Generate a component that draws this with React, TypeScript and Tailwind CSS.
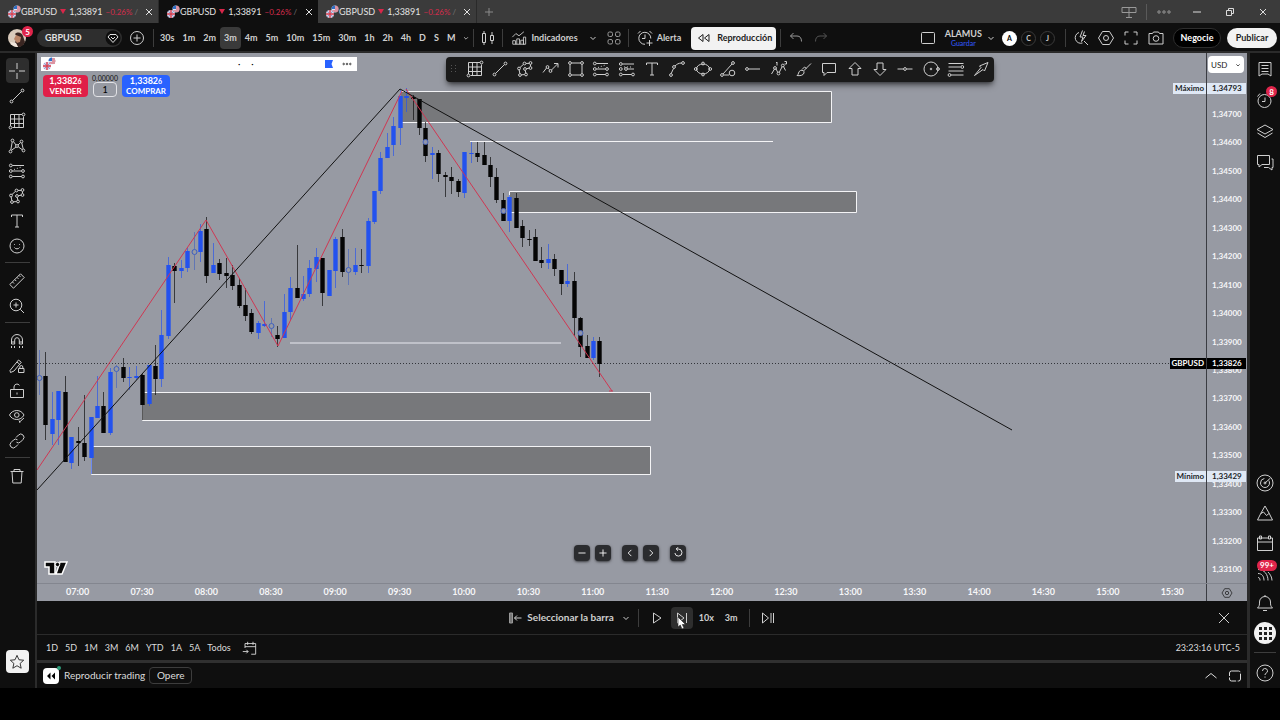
import { useState } from "react"
import type { ReactNode } from "react"

const dot = (cx: number, cy: number, r = 1.4) => <circle key={`${cx}-${cy}`} cx={cx} cy={cy} r={r} />

// 18x18 line icons, all drawn with a one pixel stroke
const icons: Record<string, ReactNode> = {
    cross: <path d="M9 1v6M9 11v6M1 9h6M11 9h6" />,
    line: <>{dot(3.5, 14.5)}{dot(14.5, 3.5)}<path d="M4.6 13.4 13.4 4.6" /></>,
    grid: <><path d="M2.5 2.5h11.5M2.5 2.5v11.5M15.5 4.5v11h-11M2.5 7h13M2.5 11.5h13M6.5 2.5v13M11 2.5v13" />{dot(15.5, 2.5)}{dot(2.5, 15.5)}</>,
    pattern: <>{dot(4.5, 3.5)}{dot(13.5, 4.5)}{dot(9, 9)}{dot(2.5, 14.5)}{dot(15.5, 13.5)}<path d="M4.2 5 2.8 13M5.4 4.6 8 8M12.5 5.6 10 8M13.8 6l1.4 6M3.5 13.3 8 10M10.2 9.8l4.2 3" /></>,
    fib: <>{dot(2.8, 3.5)}{dot(2.8, 9)}{dot(2.8, 14.5)}{dot(15, 9)}{dot(15, 14.5)}<path d="M4.3 3.5H16M4.3 9h9.3M4.3 14.5h9.3" /><path d="M6 7.5 14 4.8" strokeDasharray="1 2" /></>,
    forecast: <>{dot(2.8, 4)}{dot(2.8, 9)}{dot(8, 9)}{dot(2.8, 14.5)}{dot(15, 14.5)}<path d="M4.3 4H16M9.5 9H16M4.3 14.5h9.3" /><path d="M6 7 14 7" strokeDasharray="1 2" /></>,
    brushShape: <>{dot(3, 8.5)}{dot(8.5, 3.5)}{dot(14.5, 3)}{dot(14.5, 8)}{dot(9, 9)}{dot(10, 14.5)}{dot(4, 15)}<path d="M4 7.5 7.4 4.4M10 3.4h3M14.5 4.5v2M13 8.2l-2.6.5M9.3 10.5l.5 2.6M8.5 14.6l-3 .2M3.2 10l.6 3.5" /></>,
    text: <path d="M3.5 5V3h11v2M9 3v12M7 15h4" />,
    smile: <><circle cx="9" cy="9" r="7" /><path d="M6.5 10.5c.8 1.8 4.2 1.8 5 0M6.5 7v.8M11.5 7v.8" /></>,
    ruler: <path d="M1.8 12.5 12.5 1.8l3.7 3.7L5.5 16.2zM4.5 10l1.5 1.5M6.8 7.6l1.5 1.5M9 5.4l1.5 1.5M11 3.4l1.5 1.5" />,
    zoomIn: <><circle cx="8" cy="8" r="5.8" /><path d="m12.3 12.3 3.7 3.7M8 5.5v5M5.5 8h5" /></>,
    magnet: <path d="M3.5 12V8a5.500 5.500 0 0 1 11 0v4h-3.200V8a2.300 2.300 0 0 0-4.600 0v4zM3.500 10h3.200M11.300 10h3.200M3.500 14v2M6.500 14v2M11.500 14v2M14.500 14v2" />,
    pencilLock: <><path d="M2 13.500 10.500 3l2.800 2.300L6 14l-3.500 1.500zM9 5l2.600 2.200" /><path d="M10.500 11.500h5.500v4h-5.500zM11.800 11.500V10a1.500 1.500 0 0 1 3 0v1.500" /></>,
    lock: <><path d="M2.500 7.500h13v8h-13zM6 7.500V5a3 3 0 0 1 5.500-1.600" /><path d="M9 10.500v2" /></>,
    eye: <><path d="M1.500 8c3-6 11.500-6 14.500 0-3 6-11.500 6-14.500 0z" /><circle cx="8.800" cy="8" r="2.300" /><path d="m11 15.500 5-4.500M12 15.500l-1-2" /></>,
    link: <path d="M8 5.500 10.500 3a3 3 0 0 1 4.500 4.500L12.500 10a3 3 0 0 1-4 .200M10 12.500 7.500 15A3 3 0 0 1 3 10.500L5.500 8a3 3 0 0 1 4-.200" />,
    trash: <path d="M2.500 4.500h13M6 4.500v-2h6v2M4 4.500l.800 11.500h8.400L14 4.500" />,
    star: <path d="m9 1.500 2.200 5 5.300.5-4 3.600 1.200 5.400L9 13.200 4.300 16l1.200-5.400-4-3.600 5.300-.5z" />,
    trend: <>{dot(5.500, 7)}{dot(8.500, 11)}<path d="m1 12.500 3.500-4.500M6.300 8.200l1.200 1.500M9.500 10l6-6M12 3.500h4v4" /></>,
    rect: <>{dot(3, 3)}{dot(15, 3)}{dot(3, 15)}{dot(15, 15)}<path d="M4.500 3h9M4.500 15h9M3 4.500v9M15 4.500v9" /></>,
    curve: <>{dot(3, 15)}{dot(6, 7)}{dot(15, 3)}<path d="M3.200 13.500 5.500 8.500M7 6c2-2 3.500-2.800 6.500-3" /></>,
    ellipse: <><ellipse cx="9" cy="9" rx="6.500" ry="5" />{dot(1.800, 9)}{dot(16.200, 9)}{dot(9, 3.500)}{dot(9, 14.500)}</>,
    angle: <>{dot(3, 15)}{dot(14, 3)}<circle cx="13" cy="13" r="2.800" /><path d="M4 14 13 4M5 15h5" /></>,
    hray: <>{dot(3, 9)}<path d="M4.500 9H16" /></>,
    waves: <><path d="m1.500 14 3-5M5.800 8.500l2 4M9.200 12.500l3-6M13.500 6.500l2 4" />{dot(5, 8)}{dot(8.500, 13.500)}{dot(12.800, 5.500)}<path d="M6 3l1-1v3.500M14.500 1.500h2v2.500h-2" /></>,
    brush: <path d="M2 15.500c2-1 1-4 3.500-5 2-.800 4 .500 3.500 2.500-.600 2.500-4.500 3-7 2.500zM8.500 11l7.500-7.500M7 9.500l2.500-2.500 2 1.500" />,
    comment: <path d="M2.500 3.500h13v9H7l-3 3v-3H2.500z" />,
    up: <path d="m9 2.500 6 6h-3v6.500H6V8.500H3z" />,
    down: <path d="m9 15.500-6-6h3V3h6v6.500h3z" />,
    hline: <>{dot(9, 9)}<path d="M1.500 9h6M10.500 9h6" /></>,
    circle: <><circle cx="9" cy="9" r="7" /><circle cx="9" cy="9" r=".8" />{dot(16, 9)}</>,
    fibLines: <>{dot(15.300, 7)}{dot(2.500, 15)}<path d="M1.500 3.500h15M1.500 7h12M1.500 11h15M4 15h12.500" /></>,
    arrow: <path d="M2.500 15.500 11 9.500l1.500 1.500L16 2.500 7.500 6 9 7.500z" />,
    candles: <path d="M3.500 4.500h3v9h-3zM5 2v2.500M5 13.500V16M11.500 6.500h3v5h-3zM13 3v3.500M13 11.500V15" />,
    indicators: <><path d="M2 16V12h3v4M6.500 16v-6h3v6M11 16v-4.500h3V16M14 16V8h2.500v8zM2 16h13" /><path d="m1.500 8 4-4 3.500 2.500 5.500-4.500" /></>,
    apps: <><rect x="3" y="3" width="4.500" height="4.500" rx="1.500" /><rect x="10.500" y="3" width="4.500" height="4.500" rx="1.500" /><rect x="3" y="10.500" width="4.500" height="4.500" rx="1.500" /><rect x="10.500" y="10.500" width="4.500" height="4.500" rx="1.500" /></>,
    alarm: <path d="M14.800 9.500A6 6 0 1 0 9 15.300M9 5.500V9.500H6M2 4.500 4.500 2M13.500 2 16 4.500M13.500 11v6M10.500 14h6" />,
    clock: <><circle cx="8.500" cy="10" r="6.500" /><path d="M9 6.500V10.500H6M1.500 5.500 4 2.500" /></>,
    replay: <path d="M8 5.500v7L3.500 9zM14 5.500v7L9.500 9z" />,
    undo: <path d="M6.500 4 3.500 7l3 3M3.500 7H10c3 0 4.500 2 4.500 5.500" />,
    redo: <path d="m11.500 4 3 3-3 3M14.500 7H8c-3 0-4.500 2-4.500 5.500" />,
    layout: <rect x="2.500" y="3.500" width="13" height="11" rx="1" />,
    quick: <path d="M10.500 14A5.500 5.500 0 1 1 7 3.500M12 12l4 4M10.500 1.500 8 8h3l-1.500 4.500L14 6.500h-3l1.500-4" />,
    hex: <><path d="M5.500 2.500h7L16.500 9l-4 6.500h-7L1.500 9z" /><circle cx="9" cy="9" r="2.500" /></>,
    full: <path d="M3 6.500V3h3.500M11.500 3H15v3.500M15 11.500V15h-3.500M6.500 15H3v-3.500" />,
    camera: <><path d="M2 4.500h3.500l1-1.500h5l1 1.500H16v10.500H2z" /><circle cx="9" cy="9.500" r="2.800" /></>,
    list: <path d="M3 2.500h12v13.500l-3-2H6l-3 2zM5.500 5.500h7M5.500 8.500h7M5.500 11.500h7" />,
    layers: <path d="m9 3 8 4.500-8 4.500-8-4.500zM1.500 11 9 15.500l7.500-4.500" />,
    chat: <path d="M1.500 2.500h12v9H6l-3 2.500v-2.500H1.500zM15.500 6h1.500v8.500h-1v2.500l-3.500-2.500H8" />,
    target: <><circle cx="9" cy="9" r="8" /><circle cx="9" cy="9" r="4.500" strokeDasharray="20 5" /><path d="m9 9 5.500-5" /><circle cx="9" cy="9" r="1" /></>,
    ideas: <path d="M9 2 5 9 1.500 16h15L13 9zM5 9.500l2.500-1.500 3 3.500 2.500-2" />,
    calendar: <path d="M3 4h2M5 4h8M15 4h1.500v12.500h-15V4H3M1.500 8h15M3.500 2h2v3h-2zM12.500 2h2v3h-2z" />,
    feed: <path d="M2 13.500c1.500 0 2 1 2 3M2 9.500c4 0 6 3 6 7M2 5.500c6.500 0 10 5 10 11M12 8c2 2 4 5 4 8.500" />,
    bell: <path d="M1.500 14h15c-2-2-2-3-2-6a5.500 5.500 0 0 0-11 0c0 3 0 4-2 6zM7 16.500h4M9 1v1.500" />,
    help: <><circle cx="9" cy="9" r="8" /><path d="M6.500 7a2.500 2.500 0 1 1 3.500 2.300c-.700.300-1 .700-1 1.700M9 12.500v1.200" /></>,
    barSelect: <><path d="M2.500 4h3v10h-3z" fill="#777" stroke="#999" /><path d="M14.500 9H7.500M10 6.500 7.500 9l2.500 2.500" /></>,
    play: <path d="m5.500 4 7.500 5-7.500 5z" />,
    step: <path d="m4.500 4 6.500 5-6.500 5zM13.500 4v10" />,
    skip: <path d="m3.500 4 6 5-6 5zM12 4v10M14.500 4v10" />,
    close: <path d="m4 4 10 10M14 4 4 14" />,
    smallClose: <path d="m6 6 6 6M12 6l-6 6" />,
    plus: <path d="M9 5v8M5 9h8" />,
    minus: <path d="M5 9h8" />,
    plusCircle: <><circle cx="9" cy="9" r="6.500" /><path d="M9 5.500v7M5.500 9h7" /></>,
    down2: <path d="m6.500 8 2.500 2.500L11.500 8" />,
    up2: <path d="m3.500 11 5.500-4.500 5.500 4.500" />,
    left: <path d="M10.500 5.500 7 9l3.500 3.500" />,
    right: <path d="M7.500 5.500 11 9l-3.500 3.500" />,
    reset: <path d="M7 4.500h2.500a4 4 0 1 1-4 4.500M9 2.500l-2 2 2 2" />,
    goto: <path d="M4.500 9V4h12v12h-5M4.500 7.500h12M7.500 2v3.500M13.500 2v3.500M2 13h6M6 11l2 2-2 2" />,
    square: <rect x="3.500" y="4" width="11" height="10" rx="2" strokeDasharray="9 1.500" />,
    dots: <>{dot(4, 9, 1.2)}{dot(9, 9, 1.2)}{dot(14, 9, 1.2)}</>,
    split: <path d="M2 4.500h14v5H2zM9 4.500v10M6 14.500h6" />,
    restore: <path d="M5.500 7.500h5v5h-5zM7.500 7.500v-2h5v5h-2" />,
    gem: <><circle cx="9" cy="9" r="7.500" fill="#0f0f0f" stroke="none" /><path d="M6 5.500h6L14 8 9 13.500 4 8zM7 8l2 2 2-2" /></>,
}

const Icon = ({ name, className = "size-[18px]" }: { name: string, className?: string }) => (
    <svg viewBox="0 0 18 18" className={`shrink-0 ${className}`} fill="none" stroke="currentColor" strokeWidth="1" aria-hidden="true">
        {icons[name]}
    </svg>
)

const Flags = () => (
    <svg viewBox="0 0 14 14" className="size-[14px] shrink-0" aria-hidden="true">
        <circle cx="10" cy="4" r="3.500" fill="#dfe6f5" />
        <path d="M6.500 4A3.500 3.500 0 0 1 10 .5V4z" fill="#2f6fc4" />
        <path d="M10 2h3M10 4h3.500M7 6h6" stroke="#d9404f" />
        <circle cx="5" cy="9" r="4" fill="#d8d4ea" />
        <path d="M2.200 6.200 7.800 11.800M7.800 6.200 2.200 11.800" stroke="#5b74b8" strokeWidth=".6" />
        <path d="M5 5v8M1 9h8" stroke="#d9404f" strokeWidth="1.400" />
    </svg>
)

const Sep = () => <span className="h-[18px] w-px shrink-0 bg-[#3d3d3d]" />

const Tab = ({ active = false }: { active?: boolean }) => (
    <div className={`flex w-[159px] items-center pl-[7px] text-[9px] text-[#e2e2e2] ${active ? "bg-[#0f0f0f]" : "border-r border-[#2a2a2a]"}`}>
        <Flags />
        <a href="#chart" className="flex flex-1 items-center gap-0.5 whitespace-nowrap">
            <span>GBPUSD</span>
            <svg viewBox="0 0 6 5" className="mx-px h-[5px] w-[6px]" aria-hidden="true"><path d="M0 0h6L3 5z" fill="#d8274a" /></svg>
            <span>1,33891</span>
            <span className="ml-px text-[8px] text-[#d42c4c]">−0.26%</span>
            <span className="text-[8px] text-[#777]">/</span>
        </a>
        <button aria-label="Cerrar pestaña"><Icon name="smallClose" /></button>
    </div>
)

const TabBar = () => (
    <header className="flex h-[23px] shrink-0 bg-[#3b3b3b] text-[#dcdcdc]">
        <Tab />
        <Tab active />
        <Tab />
        <button aria-label="Nueva pestaña" className="ml-[3px] text-[#8a8a8a]"><Icon name="plus" /></button>
        <div className="ml-auto flex items-center">
            <button aria-label="Dividir" className="text-[#999]"><Icon name="split" /></button>
            <span className="mx-2 h-4 w-px bg-[#5a5a5a]" />
            <button aria-label="Más" className="text-[#999]"><Icon name="dots" /></button>
            <button aria-label="Minimizar" className="ml-[15px]"><Icon name="minus" /></button>
            <button aria-label="Restaurar" className="ml-[15px]"><Icon name="restore" /></button>
            <button aria-label="Cerrar" className="ml-[15px] mr-2"><Icon name="smallClose" /></button>
        </div>
    </header>
)

const timeframes = ["30s", "1m", "2m", "3m", "4m", "5m", "10m", "15m", "30m", "1h", "2h", "4h", "D", "S", "M"]

const Toolbar = () => {
    const [frame, setFrame] = useState("3m")

    return <nav className="flex h-7 shrink-0 items-center bg-[#0f0f0f] pt-0.5 text-[9px] font-bold text-[#cfcfcf]">
        <button aria-label="Cuenta" className="relative ml-2 size-[18px] shrink-0">
            <svg viewBox="0 0 18 18" className="size-[18px]" aria-hidden="true">
                <circle cx="9" cy="9" r="9" fill="#d9cabb" />
                <path d="M7 5c3-3 7-1 8 2l2 6c-1 3-4 5-7 5l-3-5 3-4z" fill="#3a2622" />
                <path d="M8 6l5 2-1 5-3 1-3-4z" fill="#b98467" />
                <path d="M2 13l6 1 2 4c-3 0-6-1-8-5z" fill="#f1e6dc" />
            </svg>
            <span className="absolute -right-[7px] -top-[3px] flex size-[11px] items-center justify-center rounded-full bg-[#e0254b] text-[8px] text-white">5</span>
        </button>
        <button className="ml-[11px] flex h-[18px] w-[85px] shrink-0 items-center justify-between rounded-full bg-[#2e2e2e] pl-2 text-[#e2e2e2]">
            GBPUSD <Icon name="gem" />
        </button>
        <button aria-label="Añadir símbolo" className="ml-[6px] mr-[7px]"><Icon name="plusCircle" /></button>
        <Sep />
        <div className="ml-0.5 flex">
            {timeframes.map(t => (
                <button key={t} onClick={() => setFrame(t)} className={`h-[22px] rounded px-1 ${t === frame ? "bg-[#3a3a3a]" : ""}`}>{t}</button>
            ))}
        </div>
        <button aria-label="Intervalos"><Icon name="down2" className="size-[14px]" /></button>
        <Sep />
        <button aria-label="Velas" className="mx-[5px]"><Icon name="candles" /></button>
        <Sep />
        <button className="ml-2 flex items-center gap-1"><Icon name="indicators" className="size-4" />Indicadores</button>
        <button aria-label="Favoritos" className="ml-[6px]"><Icon name="down2" /></button>
        <button aria-label="Plantillas" className="ml-[3px] mr-[5px] text-[#999]"><Icon name="apps" /></button>
        <Sep />
        <button className="ml-[7px] flex items-center gap-[3px]"><Icon name="alarm" />Alerta</button>
        <button className="ml-[10px] mr-1 flex h-[23px] w-[85px] items-center justify-center gap-1 rounded bg-[#f2f2f2] text-[#1c1c1c]"><Icon name="replay" />Reproducción</button>
        <Sep />
        <button aria-label="Deshacer" className="ml-[6px] text-[#999]"><Icon name="undo" /></button>
        <button aria-label="Rehacer" className="ml-[7px] text-[#555]"><Icon name="redo" /></button>
        <div className="ml-auto flex items-center">
            <button aria-label="Diseño"><Icon name="layout" /></button>
            <button className="ml-2 flex flex-col items-center leading-[10px]">
                ALAMUS
                <span className="text-[7px] font-medium leading-[8px] text-[#2f55f0]">Guardar</span>
            </button>
            <button aria-label="Diseños"><Icon name="down2" /></button>
            <div className="ml-0.5 mr-[10px] flex gap-1 text-[7px]">
                <button className="size-[15px] rounded-full bg-white text-black">A</button>
                <button className="size-[15px] rounded-full border border-[#3a3a3a]">C</button>
                <button className="size-[15px] rounded-full border border-[#3a3a3a]">J</button>
            </div>
            <Sep />
            <div className="ml-[6px] mr-2 flex gap-[7px]">
                <button aria-label="Búsqueda rápida"><Icon name="quick" /></button>
                <button aria-label="Ajustes"><Icon name="hex" /></button>
                <button aria-label="Pantalla completa"><Icon name="full" /></button>
                <button aria-label="Captura"><Icon name="camera" /></button>
            </div>
            <button className="h-5 w-12 rounded-full border border-[#2e2e2e] bg-black text-[9px] text-white">Negocie</button>
            <button className="ml-[6px] mr-[3px] h-5 w-[50px] rounded-full bg-[#f2f2f2] text-[#1c1c1c]">Publicar</button>
        </div>
    </nav>
}

const railGroups = [
    ["cross", "line", "grid", "pattern", "fib", "brushShape", "text", "smile"],
    ["ruler", "zoomIn"],
    ["magnet", "pencilLock", "lock", "eye", "link"],
    ["trash"],
]

const LeftRail = () => (
    <aside className="flex w-[35px] shrink-0 flex-col items-center bg-[#0f0f0f] pr-px pt-[5px] text-[#cfcfcf]">
        {railGroups.map((group, i) => (
            <div key={i} className="flex w-full flex-col items-center">
                {i > 0 && <span className="mb-[5px] mt-1 h-px w-[25px] bg-[#3d3d3d]" />}
                {group.map(name => (
                    <button key={name} aria-label={name} className={`flex h-[25px] w-[23px] items-center justify-center rounded ${name === "cross" ? "bg-[#2e2e2e]" : ""}`}>
                        <Icon name={name} />
                    </button>
                ))}
            </div>
        ))}
        <button aria-label="Favoritos" className="mb-[15px] mt-auto flex size-[23px] items-center justify-center rounded bg-[#f2f2f2] text-[#222]">
            <Icon name="star" className="size-4" />
        </button>
    </aside>
)

const railTop = ["list", "clock", "layers", "chat"]
const railBottom = ["target", "ideas", "calendar", "feed", "bell"]

const RightRail = () => (
    <aside className="flex w-[30px] shrink-0 flex-col items-center bg-[#0f0f0f] text-[#cfcfcf]">
        {railTop.map(name => (
            <button key={name} aria-label={name} className="relative flex h-[31px] items-center">
                <Icon name={name} />
                {name === "clock" && <span className="absolute -right-[3px] top-0.5 flex size-[11px] items-center justify-center rounded-full bg-[#e0254b] text-[8px] font-bold text-white">8</span>}
            </button>
        ))}
        <div className="mt-auto flex flex-col items-center">
            {railBottom.map(name => (
                <button key={name} aria-label={name} className="relative flex h-[30px] items-center">
                    <Icon name={name} />
                    {name === "feed" && <span className="absolute -right-[3px] top-0.5 rounded-full bg-[#e0254b] px-[3px] text-[8px] font-bold leading-[11px] text-white">99+</span>}
                </button>
            ))}
            <button aria-label="Aplicaciones" className="my-1 grid size-[22px] grid-cols-[3px_3px_3px] place-content-center gap-0.5 rounded-full bg-[#f2f2f2]">
                {Array.from({ length: 9 }, (_, i) => <span key={i} className="size-[3px] bg-[#222]" />)}
            </button>
            <span className="my-1 h-px w-[22px] bg-[#3d3d3d]" />
            <button aria-label="Ayuda" className="flex h-[31px] items-center"><Icon name="help" /></button>
        </div>
    </aside>
)

// [x, high, body top, body bottom, low, colour: k = black, b = blue, o = ring]
type Candle = [number, number, number, number, number, "k" | "b" | "o"]
const candles: Candle[] = [
    [39, 350, 378, 378, 395, "o"], [45, 352, 376, 425, 440, "k"], [52, 392, 419, 434, 445, "b"], [58, 391, 391, 420, 445, "b"],
    [65, 376, 392, 462, 462, "k"], [71, 437, 437, 463, 469, "b"], [78, 427, 441, 443, 466, "k"], [84, 395, 443, 457, 461, "k"],
    [91, 417, 417, 458, 474, "b"], [97, 376, 406, 418, 418, "b"], [103, 392, 406, 433, 433, "k"], [110, 368, 372, 433, 435, "b"],
    [116, 365, 369, 369, 388, "o"], [123, 358, 367, 378, 382, "k"], [129, 367, 377, 378, 390, "b"], [136, 366, 376, 378, 380, "b"],
    [142, 373, 375, 405, 420, "k"], [149, 365, 365, 404, 406, "b"], [155, 345, 366, 379, 395, "k"], [161, 310, 335, 379, 387, "b"],
    [168, 257, 265, 336, 339, "b"], [174, 263, 266, 271, 303, "k"], [181, 260, 268, 271, 278, "b"], [187, 248, 251, 268, 272, "b"],
    [194, 232, 252, 252, 270, "o"], [200, 224, 231, 252, 262, "b"], [206, 217, 229, 276, 283, "k"], [213, 243, 265, 273, 273, "b"],
    [219, 259, 263, 274, 280, "k"], [226, 258, 273, 276, 288, "k"], [232, 265, 275, 286, 290, "k"], [239, 278, 285, 306, 308, "k"],
    [245, 288, 305, 316, 321, "k"], [251, 309, 313, 332, 334, "k"], [258, 321, 323, 333, 339, "b"], [264, 301, 324, 326, 327, "b"],
    [271, 318, 326, 326, 337, "o"], [277, 326, 335, 339, 347, "k"], [284, 294, 312, 338, 338, "b"], [290, 277, 288, 312, 320, "b"],
    [297, 245, 288, 298, 298, "k"], [303, 276, 294, 299, 301, "b"], [309, 260, 268, 294, 297, "b"], [316, 248, 257, 269, 282, "b"],
    [322, 258, 258, 293, 306, "k"], [329, 270, 270, 296, 296, "b"], [335, 237, 239, 271, 288, "b"], [342, 229, 237, 272, 277, "k"],
    [348, 249, 270, 270, 285, "o"], [355, 248, 265, 272, 275, "b"], [361, 249, 265, 266, 273, "k"], [368, 218, 221, 266, 273, "b"],
    [374, 191, 191, 222, 224, "b"], [380, 152, 158, 191, 194, "b"], [387, 133, 147, 158, 158, "b"], [393, 117, 126, 145, 156, "b"],
    [400, 90, 96, 128, 145, "b"], [406, 88, 96, 98, 112, "b"], [413, 95, 97, 99, 120, "k"], [419, 99, 99, 128, 135, "k"],
    [425, 122, 128, 156, 162, "k"], [432, 147, 153, 155, 179, "b"], [438, 150, 153, 174, 182, "k"], [445, 172, 175, 177, 197, "k"],
    [451, 167, 177, 181, 194, "k"], [458, 179, 181, 192, 197, "k"], [464, 152, 152, 193, 198, "b"], [471, 142, 153, 154, 163, "b"],
    [477, 142, 153, 157, 162, "k"], [484, 142, 155, 165, 165, "k"], [490, 157, 165, 177, 187, "k"], [496, 168, 177, 200, 203, "k"],
    [503, 193, 200, 221, 221, "k"], [509, 195, 197, 221, 232, "b"], [516, 193, 198, 228, 228, "k"], [522, 220, 226, 238, 247, "k"],
    [529, 230, 239, 240, 246, "k"], [535, 229, 237, 261, 261, "k"], [541, 247, 260, 263, 268, "k"], [548, 244, 259, 263, 269, "b"],
    [554, 254, 259, 269, 276, "k"], [561, 270, 270, 284, 295, "k"], [567, 264, 281, 284, 287, "b"], [574, 272, 281, 318, 336, "k"],
    [580, 317, 318, 347, 357, "k"], [587, 335, 346, 358, 358, "k"], [593, 337, 341, 358, 360, "b"], [599, 337, 341, 364, 377, "k"],
]

const zones = [[400, 91, 431, 31], [509, 191, 347, 21], [142, 392, 508, 28], [91, 446, 559, 28]]

const markers = [[425, 142], [503, 211], [580, 333]]

const Plot = () => (
    <svg className="block size-full" role="img" aria-label="GBPUSD 3m">
        <line x1="0" x2="100%" y1="310.5" y2="310.5" stroke="#33353b" strokeDasharray="1 2" />
        <g transform="translate(-37 -53)">
            {zones.map(([x, y, w, h]) => (
                <path key={y} d={`M${x + .5} ${y + .5}h${w}v${h}h-${w}z`} fill="#77787b" stroke="#f4f4f6" />
            ))}
            <path d="M470 141.500h303" stroke="#f4f4f6" />
            <path d="M290 343h271" stroke="#bfc1c9" strokeWidth="2" />
            {candles.map(([x, high, top, bottom, low, kind]) => kind === "o" ? (
                <g key={x} stroke="#3d5fc0" fill="none">
                    <path d={`M${x + .5} ${high}V${top - 3}M${x + .5} ${top + 3}V${low}`} opacity=".6" />
                    <circle cx={x + .5} cy={top} r="2.500" />
                </g>
            ) : (
                <g key={x} fill={kind === "b" ? "#2352ee" : "#050505"}>
                    <rect x={x} y={high} width="1" height={low - high} opacity=".65" />
                    <rect x={x - 1.700} y={top} width="4.400" height={bottom - top} />
                </g>
            ))}
            <g fill="none">
                <path d="M37 470 206 220 278 346 402 91M406 89 612 391M609 391h4" stroke="#cf3752" />
                <path d="M37 490 400 89 1012 430" stroke="#121212" />
                {markers.map(([x, y]) => <circle key={x} cx={x + .5} cy={y} r="2.500" fill="#8f94ac" stroke="#4a66bd" />)}
            </g>
        </g>
    </svg>
)

const prices = Array.from({ length: 17 }, (_, i) => `1,3${4700 - i * 100}`)
const times = Array.from({ length: 18 }, (_, i) => `${String(7 + Math.floor(i / 2)).padStart(2, "0")}:${i % 2 ? "30" : "00"}`)

const PriceTag = ({ label, value, className }: { label: string, value: string, className: string }) => (
    <div className={`absolute right-px flex h-[11px] text-[8px] font-bold leading-[11px] ${className}`}>
        <span className="px-0.5">{label}</span>
        <span className="w-10 border-l border-[#3a3c42] pl-[5px]">{value}</span>
    </div>
)

const drawTools = ["grid", "line", "brushShape", "trend", "rect", "fib", "forecast", "text", "curve", "ellipse", "angle", "hray", "waves", "brush", "comment", "up", "down", "hline", "circle", "fibLines", "arrow"]

const DrawToolbar = () => (
    <div className="absolute left-[409px] top-1 flex h-[25px] w-[548px] items-center rounded bg-[#1a1a1a] pb-px pl-1 text-[#cfcfcf] shadow-md shadow-black/50">
        <svg viewBox="0 0 8 10" className="h-[10px] w-2" fill="#555" aria-hidden="true">
            {[1, 4, 7].map(y => <path key={y} d={`M1 ${y}h1v1h-1zM5 ${y}h1v1h-1z`} />)}
        </svg>
        <div className="ml-1 flex flex-1">
            {drawTools.map(name => (
                <button key={name} aria-label={name} className="flex flex-1 justify-center"><Icon name={name} /></button>
            ))}
        </div>
    </div>
)

const OrderPanel = () => (
    <div className="absolute left-1 top-1 text-[9px]">
        <div className="flex h-[14px] w-[316px] items-center bg-white pl-px text-black">
            <Flags />
            <span className="ml-[182px]">·</span>
            <span className="ml-[11px]">·</span>
            <svg viewBox="0 0 8 8" className="ml-auto size-2" aria-hidden="true"><path d="M0 0h8L6.500 4 8 8H0z" fill="#2962ff" /></svg>
            <button aria-label="Más" className="ml-[5px] mr-px"><Icon name="dots" className="h-3 w-[18px]" /></button>
        </div>
        <div className="ml-0.5 mt-1 flex gap-[5px] font-bold leading-[10px] text-white">
            <button className="h-[22px] w-[45px] rounded bg-[#e01f48] text-[8px]">
                <span className="block text-[9px]">1,3382<sup className="top-0 text-[7px]">6</sup></span>VENDER
            </button>
            <label className="flex w-6 flex-col items-center text-[7px] font-medium leading-[7px] text-[#222]">
                0,00000
                <input defaultValue="1" className="h-[15px] w-6 rounded border border-[#e2e2e6] bg-transparent text-center text-[9px] text-black" />
            </label>
            <button className="h-[22px] w-12 rounded bg-[#2962ff] text-[8px]">
                <span className="block text-[9px]">1,3382<sup className="top-0 text-[7px]">6</sup></span>COMPRAR
            </button>
        </div>
    </div>
)

const ChartNav = () => (
    <div className="absolute inset-x-0 bottom-[22px] flex justify-center gap-[5px] pl-4 text-white">
        {["minus", "plus", "left", "right", "reset"].map(name => (
            <button key={name} aria-label={name} className={`flex size-4 items-center justify-center rounded-sm bg-[#2b2c2f] shadow shadow-black/50 ${name === "left" || name === "reset" ? "ml-[6px]" : ""}`}>
                <Icon name={name} className="size-4" />
            </button>
        ))}
    </div>
)

const Chart = () => (
    <section className="relative flex min-h-0 flex-1 flex-col bg-[#979aa3]">
        <div className="flex min-h-0 flex-1">
            <div className="relative min-w-0 flex-1">
                <Plot />
                <OrderPanel />
                <DrawToolbar />
                <ChartNav />
                <svg viewBox="0 0 24 14" className="absolute bottom-2 left-[7px] h-[14px] w-6" aria-label="TradingView">
                    <path d="M1 1h10v12H5V6H1zM16 1h7l-5 12h-6z" fill="#080808" stroke="#fff" strokeWidth="1.500" />
                    <circle cx="13.500" cy="3.500" r="2.200" fill="#080808" stroke="#fff" />
                </svg>
            </div>
            <div className="flex w-[41px] flex-col justify-between border-l border-[#3a3c42] pb-2 pl-[5px] pt-[55px] text-[8px] font-bold leading-3 text-[#f6f6f8]">
                {prices.map(p => <span key={p}>{p}</span>)}
            </div>
        </div>
        <div className="flex h-[18px] shrink-0 border-t border-[#83868f] text-[9px] font-bold text-[#f6f6f8]">
            <div className="flex flex-1 items-center justify-between pb-0.5 pl-[29px] pr-[22px]">
                {times.map(t => <span key={t}>{t}</span>)}
            </div>
            <button aria-label="Ajustes del eje" className="flex w-[41px] items-center justify-center border-l border-[#3a3c42] text-[#111]"><Icon name="hex" className="size-3" /></button>
        </div>
        <select aria-label="Divisa" className="absolute right-[3px] top-[3px] h-[17px] w-9 appearance-none rounded-sm bg-white pl-[3px] text-[8px] text-[#222]">
            <option>USD</option>
        </select>
        <Icon name="down2" className="pointer-events-none absolute right-[3px] top-[6px] size-3" />
        <PriceTag label="Máximo" value="1,34793" className="top-[30px] bg-[#dfe8f5] text-[#1c1f28]" />
        <PriceTag label="GBPUSD" value="1,33826" className="top-[305px] bg-black text-white" />
        <PriceTag label="Mínimo" value="1,33429" className="top-[418px] bg-[#dfe8f5] text-[#1c1f28]" />
    </section>
)

const ReplayBar = () => (
    <div className="relative flex h-[33px] shrink-0 items-center justify-center text-[10px] font-bold text-[#cfcfcf]">
        <button className="flex items-center gap-0.5"><Icon name="barSelect" />Seleccionar la barra</button>
        <button aria-label="Opciones de selección" className="mx-[3px]"><Icon name="down2" /></button>
        <Sep />
        <button aria-label="Reproducir" className="ml-[9px] mr-[5px]"><Icon name="play" /></button>
        <button aria-label="Avanzar" className="relative flex size-[22px] items-center justify-center rounded bg-[#2e2e2e]">
            <Icon name="step" />
            <svg viewBox="0 0 9 14" className="absolute left-[6px] top-[9px] h-[14px] w-[9px]" aria-hidden="true">
                <path d="M1 1v10l2.300-2 1.700 4 2-1-1.700-3.500H8.500z" fill="#fff" stroke="#222" strokeWidth=".6" />
            </svg>
        </button>
        <button className="ml-[6px] text-[9px]">10x</button>
        <button className="mx-[11px] text-[9px]">3m</button>
        <Sep />
        <button aria-label="Ir al final" className="ml-[9px]"><Icon name="skip" /></button>
        <button aria-label="Cerrar" className="absolute right-[14px]"><Icon name="close" /></button>
    </div>
)

const ranges = ["1D", "5D", "1M", "3M", "6M", "YTD", "1A", "5A", "Todos"]

const RangeBar = () => (
    <div className="flex h-[26px] shrink-0 items-center border-t border-[#2b2b2b] pl-[6px] text-[9px] text-[#dcdcdc]">
        {ranges.map(r => <button key={r} className="pl-[3px] pr-1">{r}</button>)}
        <span className="mx-[3px]"><Sep /></span>
        <button aria-label="Ir a la fecha"><Icon name="goto" className="size-4" /></button>
        <span className="ml-auto mr-[7px]">23:23:16 UTC-5</span>
    </div>
)

const TradingBar = () => (
    <footer className="flex h-[28px] shrink-0 items-center border-t-[3px] border-[#303030] pl-[6px] text-[10px] text-[#dcdcdc]">
        <span className="relative flex size-4 items-center justify-center rounded bg-white text-black">
            <svg viewBox="0 0 10 8" className="h-2 w-[10px]" aria-hidden="true"><path d="M4.500 0.500v7L1 4zM9 0.500v7L5.500 4z" /></svg>
            <span className="absolute -right-0.5 -top-0.5 size-1 rounded-full bg-[#2f9e7b]" />
        </span>
        <span className="ml-[5px]">Reproducir trading</span>
        <button className="ml-1 h-[17px] w-[43px] rounded border border-[#3d3d3d]">Opere</button>
        <button aria-label="Expandir" className="ml-auto"><Icon name="up2" /></button>
        <button aria-label="Maximizar" className="ml-[6px] mr-[3px]"><Icon name="square" /></button>
    </footer>
)

const App = () => (
    <div className="flex h-screen flex-col bg-black pb-8 font-['Lato','Open_Sans',sans-serif]">
        <TabBar />
        <Toolbar />
        <div className="flex min-h-0 flex-1 border-t-2 border-[#2b2b2b]">
            <LeftRail />
            <main className="flex min-w-0 flex-1 flex-col border-l-2 border-r-[3px] border-[#2b2b2b] bg-[#0f0f0f]">
                <Chart />
                <ReplayBar />
                <RangeBar />
                <TradingBar />
            </main>
            <RightRail />
        </div>
    </div>
)

export default App
